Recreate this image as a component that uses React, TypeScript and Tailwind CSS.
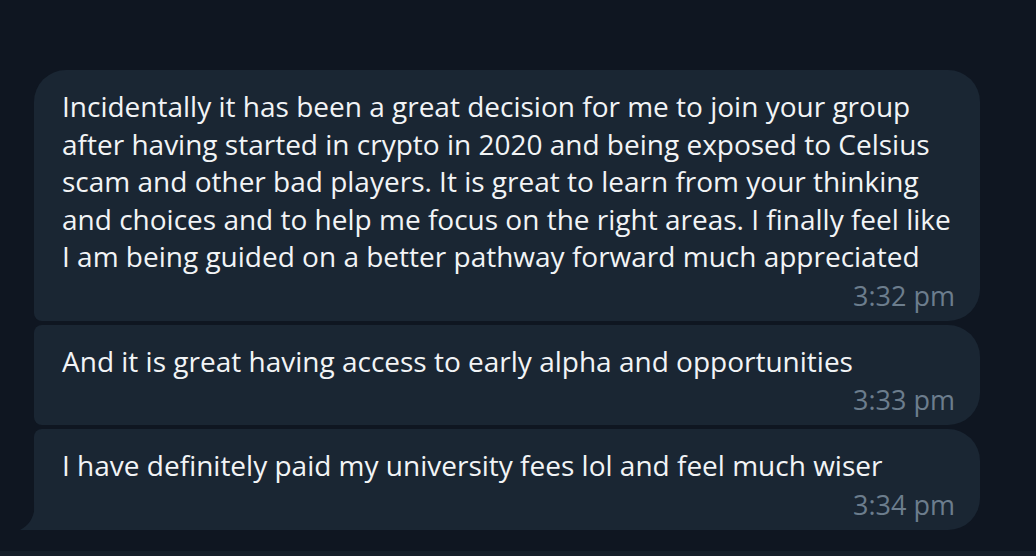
import React from 'react';

interface Message {
  id: number;
  text: string[];
  time: string;
}

const messages: Message[] = [
  {
    id: 1,
    text: [
      'Incidentally it has been a great decision for me to join your group',
      'after having started in crypto in 2020 and being exposed to Celsius',
      'scam and other bad players. It is great to learn from your thinking',
      'and choices and to help me focus on the right areas. I finally feel like',
      'I am being guided on a better pathway forward much appreciated',
    ],
    time: '3:32 pm',
  },
  {
    id: 2,
    text: ['And it is great having access to early alpha and opportunities'],
    time: '3:33 pm',
  },
  {
    id: 3,
    text: ['I have definitely paid my university fees lol and feel much wiser'],
    time: '3:34 pm',
  },
];

export default function App() {
  return (
    <div
      className="w-[1036px] h-[556px] bg-[#0f1621] flex flex-col overflow-hidden"
      style={{ fontFamily: '"Open Sans", "Noto Sans", sans-serif' }}
    >
      <div className="flex-1 flex flex-col gap-[4px] pt-[70px] pl-[34px] w-[980px]">
        {messages.map((m, i) => {
          const first = i === 0;
          const last = i === messages.length - 1;
          return (
            <div
              key={m.id}
              className={`relative bg-[#1a2633] pl-[28px] pr-[25px] pt-[18px] pb-[7px] rounded-r-[32px] ${
                first ? 'rounded-tl-[32px]' : 'rounded-tl-[8px]'
              } ${last ? 'rounded-bl-none' : 'rounded-bl-[8px]'}`}
            >
              <div className="text-[28px] leading-[37.5px] text-[#f2f4f6]">
                {m.text.map((line, j) => (
                  <div key={j} className="whitespace-nowrap">
                    {line}
                  </div>
                ))}
              </div>
              <div className="flex justify-end text-[27px] leading-[36px] text-[#6c7d8d] mt-[2px]">
                {m.time}
              </div>
              {last && (
                <svg
                  className="absolute bottom-0 left-[-14px]"
                  width="15"
                  height="28"
                  viewBox="0 0 15 28"
                >
                  <path d="M15 0 C15 14 10 23 0 28 L15 28 Z" fill="#1a2633" />
                </svg>
              )}
            </div>
          );
        })}
      </div>
      <div className="h-[5px] bg-[#161e29]" />
    </div>
  );
}
